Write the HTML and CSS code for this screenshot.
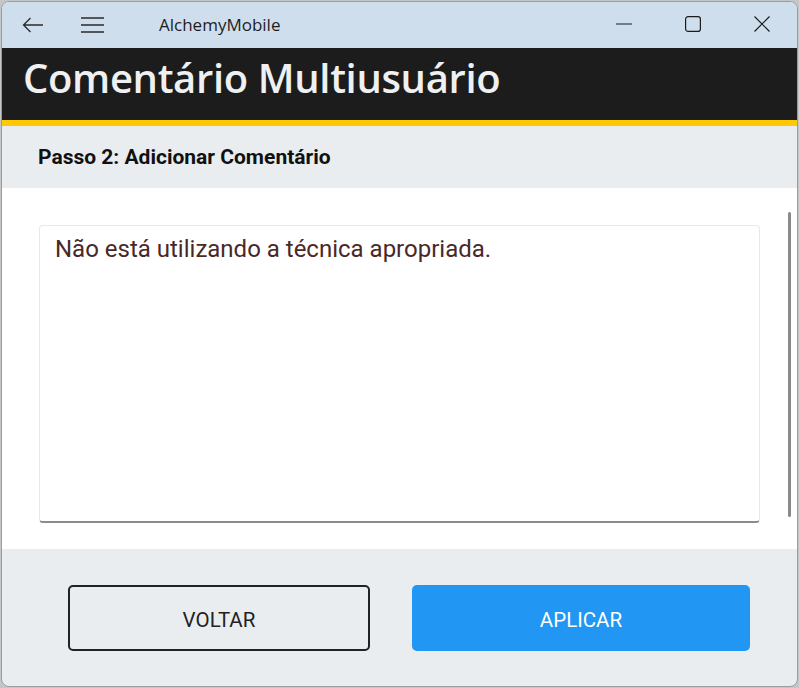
FILE: index.html
```html
<!DOCTYPE html>
<html lang="pt">
<head>
    <meta charset="UTF-8">
    <meta name="viewport" content="width=device-width, initial-scale=1.0">
    <title>AlchemyMobile</title>
    <link rel="stylesheet" href="styles.css">
</head>
<body>
    <div class="window">
        <div class="titlebar">
            <div class="titlebar-left">
                <span class="tb-icon back">
                    <svg width="22" height="16" viewBox="0 0 22 16"><path d="M1.5 8H21M8.5 1L1.5 8l7 7" fill="none" stroke="#2b2b2b" stroke-width="1.3"/></svg>
                </span>
                <span class="tb-icon menu">
                    <svg width="23" height="16" viewBox="0 0 23 16"><path d="M0 1h23M0 8h23M0 15h23" fill="none" stroke="#2b2b2b" stroke-width="1.3"/></svg>
                </span>
                <span class="app-name">AlchemyMobile</span>
            </div>
            <div class="window-controls">
                <span class="ctrl">
                    <svg width="16" height="16" viewBox="0 0 16 16"><path d="M0 8h16" stroke="#1b1b1b" stroke-width="1.2"/></svg>
                </span>
                <span class="ctrl">
                    <svg width="16" height="16" viewBox="0 0 16 16"><rect x="0.6" y="0.6" width="14.8" height="14.8" rx="2.5" fill="none" stroke="#1b1b1b" stroke-width="1.2"/></svg>
                </span>
                <span class="ctrl">
                    <svg width="16" height="16" viewBox="0 0 16 16"><path d="M0.5 0.5l15 15M15.5 0.5l-15 15" stroke="#1b1b1b" stroke-width="1.2"/></svg>
                </span>
            </div>
        </div>

        <header class="page-header">
            <h1>Comentário Multiusuário</h1>
        </header>

        <div class="step-bar">
            <h2>Passo 2: Adicionar Comentário</h2>
        </div>

        <main class="content">
            <div class="comment-box">Não está utilizando a técnica apropriada.</div>
            <div class="scrollbar"></div>
        </main>

        <footer class="actions">
            <button class="btn btn-back">VOLTAR</button>
            <button class="btn btn-apply">APLICAR</button>
        </footer>
    </div>
</body>
</html>
```

FILE: styles.css
```css
* {
    margin: 0;
    padding: 0;
    box-sizing: border-box;
}

body {
    background: #c4c6c8;
    height: 688px;
    overflow: hidden;
    font-family: Roboto, "Noto Sans", sans-serif;
    padding: 1px;
}

.window {
    width: 797px;
    height: 686px;
    border: 1px solid #9c9c9c;
    border-radius: 8px;
    overflow: hidden;
    display: flex;
    flex-direction: column;
    background: #eaedf0;
}

.titlebar {
    height: 46px;
    flex-shrink: 0;
    background: #cfdeed;
    display: flex;
    align-items: center;
    justify-content: space-between;
}

.titlebar-left {
    display: flex;
    align-items: center;
}

.tb-icon {
    display: flex;
    align-items: center;
}

.tb-icon.back {
    margin-left: 20px;
}

.tb-icon.menu {
    margin-left: 37px;
}

.app-name {
    margin-left: 55px;
    font-family: "Open Sans", "Noto Sans", sans-serif;
    font-size: 17px;
    color: #1d1d1d;
    padding-bottom: 2px;
}

.window-controls {
    display: flex;
    align-items: center;
    margin-right: 27px;
    gap: 53px;
    padding-bottom: 2px;
}

.ctrl {
    display: flex;
}

.page-header {
    flex-shrink: 0;
    background: #1c1c1c;
    border-bottom: 6px solid #ffc800;
    height: 78px;
    padding: 3px 0 0 21px;
}

.page-header h1 {
    font-family: "Open Sans", "Noto Sans", sans-serif;
    font-weight: 600;
    font-size: 40px;
    line-height: 54px;
    color: #eef0f2;
    letter-spacing: -0.35px;
}

.step-bar {
    height: 62px;
    flex-shrink: 0;
    display: flex;
    align-items: center;
    padding-left: 36px;
}

.step-bar h2 {
    font-size: 21px;
    font-weight: 700;
    color: #111;
}

.content {
    position: relative;
    background: #fff;
    height: 361px;
    flex-shrink: 0;
    padding: 37px 37px 26px 37px;
}

.comment-box {
    height: 100%;
    border: 1px solid #e8e8e8;
    border-bottom: 2px solid #8c8c8c;
    border-radius: 4px;
    padding: 9px 15px;
    font-size: 24px;
    color: #4a2828;
}

.scrollbar {
    position: absolute;
    right: 6px;
    top: 24px;
    width: 3px;
    height: 305px;
    border-radius: 2px;
    background: #8a8a8a;
}

.actions {
    flex: 1;
    display: flex;
    align-items: flex-start;
    padding: 36px 0 0 66px;
}

.btn {
    height: 66px;
    padding-top: 3px;
    border-radius: 5px;
    font-family: Roboto, "Noto Sans", sans-serif;
    font-size: 20.5px;
    cursor: pointer;
}

.btn-back {
    width: 302px;
    background: transparent;
    border: 2px solid #222;
    color: #222;
}

.btn-apply {
    width: 338px;
    margin-left: 42px;
    background: #2196f3;
    border: none;
    color: #fff;
}
```
